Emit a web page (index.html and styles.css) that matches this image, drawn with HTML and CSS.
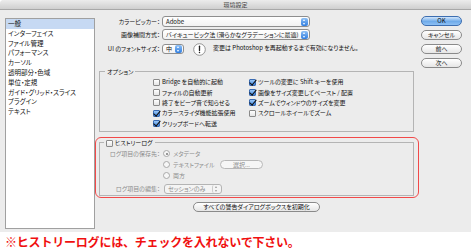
FILE: index.html
```html
<!DOCTYPE html>
<html lang="ja">
<head>
    <meta charset="UTF-8">
    <meta name="viewport" content="width=device-width, initial-scale=1.0">
    <title>環境設定</title>
    <link rel="stylesheet" href="styles.css">
</head>
<body>
    <div class="window">
        <div class="titlebar">環境設定</div>
        <div class="main">
            <ul class="sidebar">
                <li class="selected">一般</li>
                <li>インターフェイス</li>
                <li>ファイル管理</li>
                <li>パフォーマンス</li>
                <li>カーソル</li>
                <li>透明部分・色域</li>
                <li>単位・定規</li>
                <li>ガイド・グリッド・スライス</li>
                <li>プラグイン</li>
                <li>テキスト</li>
            </ul>

            <div class="content">
                <div class="field-row">
                    <span class="label">カラーピッカー：</span>
                    <div class="popup wide"><span>Adobe</span><span class="stepper"></span></div>
                </div>
                <div class="field-row">
                    <span class="label">画像補間方式：</span>
                    <div class="popup wide"><span>バイキュービック法 (滑らかなグラデーションに最適)</span><span class="stepper"></span></div>
                </div>
                <div class="field-row font-row">
                    <span class="label">UI のフォントサイズ：</span>
                    <div class="popup small"><span>中</span><span class="stepper"></span></div>
                    <svg class="info-icon" width="13" height="13" viewBox="0 0 13 13">
                        <circle cx="6.5" cy="6.5" r="5.8" fill="#fff" stroke="#8a8a8a" stroke-width="0.9"/>
                        <path d="M6.5 3.2 L6.5 7.6" stroke="#222" stroke-width="1.3" stroke-linecap="round"/>
                        <circle cx="6.5" cy="9.6" r="0.75" fill="#222"/>
                    </svg>
                    <span class="hint">変更は Photoshop を再起動するまで有効になりません。</span>
                </div>

                <div class="group options">
                    <span class="legend">オプション</span>
                    <div class="check-grid">
                        <label class="check"><span class="box"></span>Bridge を自動的に起動</label>
                        <label class="check"><span class="box"></span>ファイルの自動更新</label>
                        <label class="check"><span class="box"></span>終了をビープ音で知らせる</label>
                        <label class="check"><span class="box on"></span>カラースライダ機能拡張使用</label>
                        <label class="check"><span class="box on"></span>クリップボードへ転送</label>
                        <label class="check"><span class="box on"></span>ツールの変更に Shift キーを使用</label>
                        <label class="check"><span class="box on"></span>画像をサイズ変更してペースト / 配置</label>
                        <label class="check"><span class="box on"></span>ズームでウィンドウのサイズを変更</label>
                        <label class="check"><span class="box"></span>スクロールホイールでズーム</label>
                    </div>
                </div>

                <div class="group history">
                    <span class="legend"><span class="box"></span>ヒストリーログ</span>
                    <div class="log-row">
                        <span class="label dim">ログ項目の保存先：</span>
                        <span class="radio on"></span><span class="dim">メタデータ</span>
                    </div>
                    <div class="log-row">
                        <span class="label"></span>
                        <span class="radio"></span><span class="dim radio-text">テキストファイル</span>
                        <span class="pill dim-pill">選択...</span>
                    </div>
                    <div class="log-row">
                        <span class="label"></span>
                        <span class="radio"></span><span class="dim">両方</span>
                    </div>
                    <div class="log-row edit-row">
                        <span class="label dim">ログ項目の編集：</span>
                        <div class="popup disabled"><span>セッションのみ</span><span class="stepper"></span></div>
                    </div>
                </div>

                <div class="reset-row">
                    <span class="pill reset">すべての警告ダイアログボックスを初期化</span>
                </div>
            </div>

            <div class="actions">
                <span class="pill default">OK</span>
                <span class="pill">キャンセル</span>
                <span class="pill">前へ</span>
                <span class="pill">次へ</span>
            </div>
        </div>
    </div>
    <p class="note">※ヒストリーログには、チェックを入れないで下さい。</p>
</body>
</html>
```

FILE: styles.css
```css
body {
    margin: 0;
    background: #fff;
    font-family: "Noto Sans CJK JP", sans-serif;
    font-feature-settings: "palt";
    font-size: 6px;
    line-height: 1;
    color: #111;
}
.window {
    height: 232px;
    background: #ececec;
    border-top-left-radius: 4px;
    overflow: hidden;
}
.titlebar {
    height: 10px;
    line-height: 10px;
    text-align: center;
    color: #444;
    background: linear-gradient(#ececec, #cfcfcf);
    border-bottom: 1px solid #a8a8a8;
    box-sizing: border-box;
}
.main {
    display: flex;
}
.sidebar {
    list-style: none;
    margin: 8px 0 0 5px;
    padding: 0;
    width: 90px;
    height: 211px;
    box-sizing: border-box;
    background: #fff;
    border: 1px solid #a0a0a0;
    font-size: 6.5px;
}
.sidebar li {
    height: 9.8px;
    line-height: 9.8px;
    padding-left: 2px;
}
.sidebar .selected {
    background: #c6d9f3;
}
.content {
    margin-left: 4px;
    width: 315px;
    padding-top: 6px;
}
.field-row {
    display: flex;
    align-items: center;
    height: 11px;
    margin-bottom: 2px;
}
.field-row.font-row {
    margin-top: 3px;
    height: 12px;
}
.label {
    width: 61px;
    text-align: right;
    flex-shrink: 0;
    white-space: nowrap;
}
.popup {
    margin-left: 2px;
    height: 11px;
    box-sizing: border-box;
    display: flex;
    align-items: center;
    justify-content: space-between;
    background: linear-gradient(#fff, #f2f2f2);
    border: 1px solid #8e8e8e;
    border-radius: 3px;
    padding-left: 3px;
    white-space: nowrap;
}
.popup.wide {
    width: 148px;
}
.popup.small {
    width: 22px;
    height: 10px;
}
.stepper {
    width: 7px;
    height: 8px;
    margin-right: 1px;
    border-radius: 2px;
    background: linear-gradient(#8ec0f5, #2f7de0);
    position: relative;
}
.stepper::before,
.stepper::after {
    content: "";
    position: absolute;
    left: 2px;
    border-left: 1.5px solid transparent;
    border-right: 1.5px solid transparent;
}
.stepper::before {
    top: 1px;
    border-bottom: 2px solid #fff;
}
.stepper::after {
    bottom: 1px;
    border-top: 2px solid #fff;
}
.info-icon {
    margin-left: 9px;
}
.hint {
    margin-left: 7px;
    margin-top: -3px;
    white-space: nowrap;
}
.group {
    position: relative;
    border: 1px solid #b4b4b4;
    box-sizing: border-box;
}
.legend {
    position: absolute;
    top: -4px;
    left: 5px;
    padding: 0 2px;
    background: #ececec;
    line-height: 8px;
    display: flex;
    align-items: center;
}
.options {
    margin-top: 16px;
    height: 61px;
    padding: 5px 0 0 53px;
}
.check-grid {
    display: grid;
    grid-template-columns: 96px auto;
    grid-template-rows: repeat(5, 10.4px);
    grid-auto-flow: column;
}
.check {
    display: flex;
    align-items: center;
    white-space: nowrap;
}
.box {
    width: 7px;
    height: 7px;
    box-sizing: border-box;
    border: 1px solid #8a8a8a;
    border-radius: 1px;
    background: linear-gradient(#fff, #e4e4e4);
    margin-right: 2px;
    flex-shrink: 0;
    position: relative;
}
.box.on {
    border-color: #3a6cb4;
    background: linear-gradient(#9cc8f6, #3a84e2);
}
.box.on::after {
    content: "";
    position: absolute;
    left: 1px;
    top: -2px;
    width: 2.5px;
    height: 6px;
    border-right: 1.5px solid #111;
    border-bottom: 1.5px solid #111;
    transform: rotate(40deg);
}
.history {
    margin-top: 10px;
    height: 54px;
    padding-top: 5px;
}
.history .legend {
    left: 4px;
    color: #111;
}
.history::after {
    content: "";
    position: absolute;
    top: -6px;
    left: -5px;
    right: -6px;
    bottom: -3px;
    border: 1.5px solid #f24a4a;
    border-radius: 6px;
}
.dim {
    color: #8c8c8c;
}
.log-row {
    display: flex;
    align-items: center;
    height: 11px;
    white-space: nowrap;
}
.log-row .label {
    width: 60px;
}
.radio {
    width: 7px;
    height: 7px;
    box-sizing: border-box;
    border: 1px solid #a8a8a8;
    border-radius: 50%;
    background: #f6f6f6;
    margin: 0 3px 0 3px;
    position: relative;
}
.radio.on::after {
    content: "";
    position: absolute;
    left: 1.5px;
    top: 1.5px;
    width: 2px;
    height: 2px;
    border-radius: 50%;
    background: #777;
}
.radio-text {
    width: 47px;
}
.edit-row {
    margin-top: 2px;
}
.popup.disabled {
    width: 58px;
    height: 10px;
    margin-left: 4px;
    color: #8c8c8c;
    border-color: #b4b4b4;
    background: #f4f4f4;
}
.popup.disabled .stepper {
    background: #f4f4f4;
    border-left: 1px solid #ccc;
}
.popup.disabled .stepper::before {
    border-bottom-color: #999;
}
.popup.disabled .stepper::after {
    border-top-color: #999;
}
.pill {
    display: flex;
    align-items: center;
    justify-content: center;
    height: 10px;
    box-sizing: border-box;
    border: 1px solid #8a8a8a;
    border-radius: 5px;
    background: linear-gradient(#fff, #e6e6e6);
    white-space: nowrap;
}
.dim-pill {
    width: 43px;
    height: 9px;
    color: #8c8c8c;
    border-color: #b8b8b8;
    background: #f6f6f6;
}
.reset-row {
    display: flex;
    justify-content: center;
    margin-top: 6px;
}
.reset {
    width: 127px;
}
.actions {
    margin: 6px 0 0 7px;
    width: 41px;
    display: flex;
    flex-direction: column;
    gap: 4px;
}
.pill.default {
    border-color: #3d6eb0;
    background: linear-gradient(#d2e6fb, #6fabea 55%, #8dc0f4);
}
.note {
    margin: 3px 0 0 5px;
    font-size: 12px;
    font-weight: bold;
    font-feature-settings: normal;
    letter-spacing: -0.2px;
    line-height: 14px;
    color: #f01010;
    white-space: nowrap;
}
```
